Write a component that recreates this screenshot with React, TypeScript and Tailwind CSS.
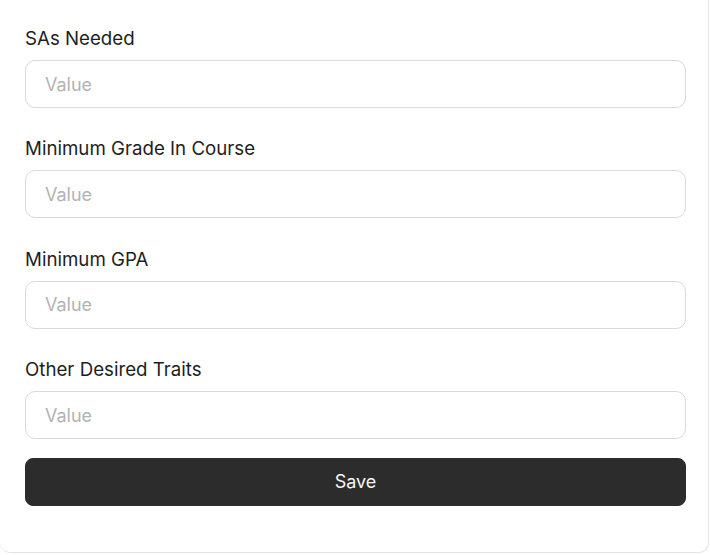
const fields = ['SAs Needed', 'Minimum Grade In Course', 'Minimum GPA', 'Other Desired Traits'];

export default function App() {
  return (
    <div className="min-h-screen bg-white" style={{ fontFamily: 'Inter, "Noto Sans", sans-serif' }}>
      <form className="w-[709px] rounded-b-[10px] border-r border-b border-[#e3e3e3] bg-white pt-[25px] pb-[46px] pl-[25px] pr-[22px]">
        <div className="flex flex-col gap-[27.4px]">
          {fields.map((label) => (
            <label key={label} className="flex flex-col gap-[7px]">
              <span className="text-[18.7px] leading-[28px] text-[#1e1e1e]">{label}</span>
              <input
                placeholder="Value"
                className="h-[48px] w-[661px] rounded-[10px] border border-[#d9d9d9] bg-white px-[19px] text-[18px] text-[#1e1e1e] outline-none placeholder:text-[#b3b3b3]"
              />
            </label>
          ))}
        </div>
        <button
          type="button"
          className="mt-[19px] h-[47.5px] w-[661px] rounded-[8px] border border-[#2c2c2c] bg-[#2c2c2c] text-[18px] text-[#f5f5f5]"
        >
          Save
        </button>
      </form>
    </div>
  );
}
